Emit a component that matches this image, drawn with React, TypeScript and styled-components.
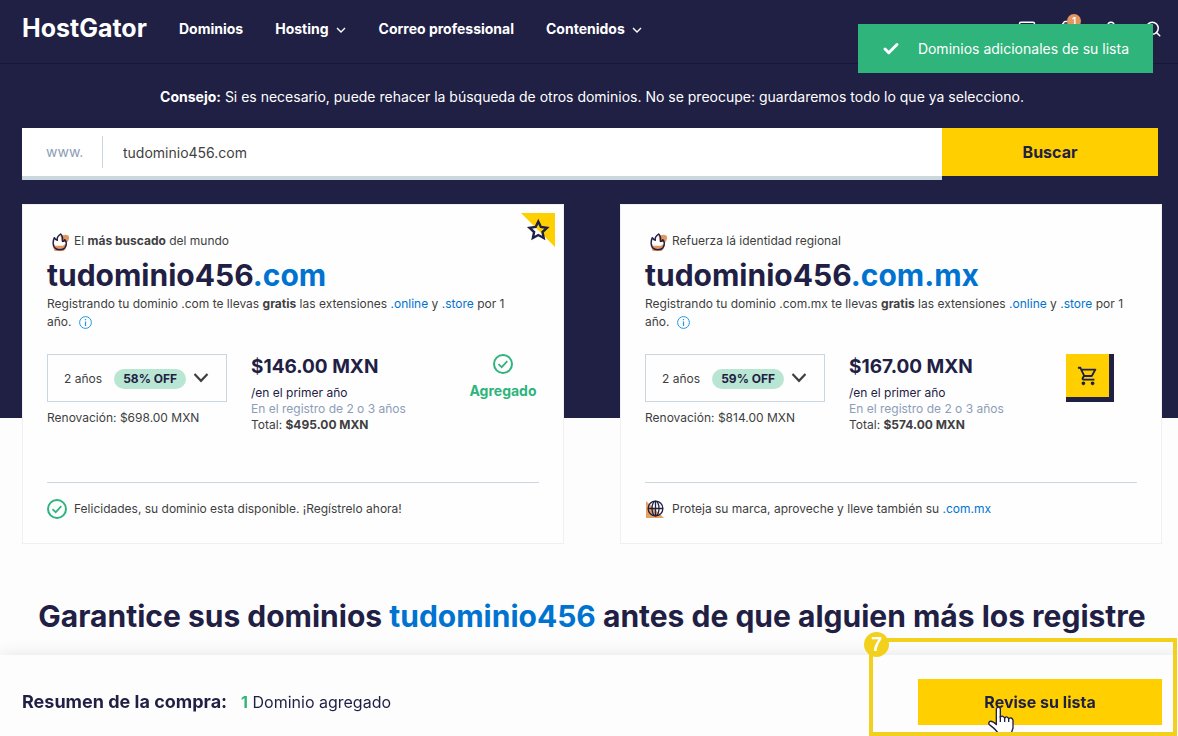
import React from 'react';
import styled, { createGlobalStyle, css } from 'styled-components';
import { Check, Monitor, Search, ShoppingBag, User } from 'lucide-react';
import { MdOutlineShoppingCart } from 'react-icons/md';

const color = {
  navy: '#1f2044',
  yellow: '#ffcf00',
  blue: '#0073d1',
  green: '#2fb47c',
  text: '#3f3f41',
  muted: '#8d9db8',
  line: '#cbd6de',
  mint: '#b9e6d3',
  peach: '#e59560',
  page: '#fdfdfd',
};

const GlobalStyle = createGlobalStyle`
  * { box-sizing: border-box; }
  body {
    margin: 0;
    background: ${color.page};
    color: ${color.text};
    font-family: Inter, "Liberation Sans", sans-serif;
    font-size: 12px;
    line-height: 18px;
  }
  button, input, select { font-family: inherit; margin: 0; border: 0; border-radius: 0; }
  h1, h2, p { margin: 0; }
  a { color: inherit; text-decoration: none; }
`;

const Page = styled.div`
  padding-bottom: 96px;
`;

const Hero = styled.div`
  background: ${color.navy};
  padding-bottom: 238px;
`;

const Header = styled.header`
  display: flex;
  align-items: center;
  height: 64px;
  padding: 0 16px 6px 22px;
  border-bottom: 1px solid #17173a;
  color: #fff;
`;

const Logo = styled.a`
  width: 157px;
  padding-bottom: 2px;
  font-size: 25px;
  font-weight: 700;
  line-height: 32px;
  white-space: nowrap;
`;

const Nav = styled.nav`
  display: flex;
  gap: 32px;
`;

const NavLink = styled.a`
  display: flex;
  align-items: center;
  gap: 6px;
  font-size: 14px;
  font-weight: 700;
  line-height: 20px;
  white-space: nowrap;
`;

const HeaderTools = styled.div`
  display: flex;
  gap: 24px;
  margin-left: auto;
`;

const ToolButton = styled.button`
  position: relative;
  display: flex;
  padding: 0;
  background: none;
  color: #fff;
`;

const CountBadge = styled.span`
  position: absolute;
  top: -6px;
  right: -3px;
  width: 14px;
  height: 14px;
  border-radius: 50%;
  background: ${color.peach};
  font-size: 10px;
  font-weight: 600;
  line-height: 14px;
  text-align: center;
`;

const Toast = styled.div`
  position: fixed;
  top: 24px;
  right: 25px;
  display: flex;
  align-items: center;
  justify-content: space-between;
  gap: 14px;
  min-width: 295px;
  height: 49px;
  padding: 0 24px;
  background: ${color.green};
  color: #fff;
  font-size: 14px;
  white-space: nowrap;
`;

const Tip = styled.p`
  padding: 23px 16px 21px 22px;
  color: #fff;
  font-size: 14px;
  line-height: 20px;
  text-align: center;
`;

const SearchForm = styled.form`
  display: flex;
  align-items: flex-start;
  margin: 0 20px 0 22px;
`;

const SearchField = styled.div`
  flex: 1;
  display: flex;
  align-items: center;
  height: 52px;
  background: #fff;
  border-bottom: 4px solid #cad7dd;
`;

const Prefix = styled.label`
  width: 81px;
  padding-left: 24px;
  border-right: 1px solid ${color.line};
  color: ${color.muted};
  font-size: 14px;
  line-height: 32px;
`;

const SearchInput = styled.input`
  flex: 1;
  height: 48px;
  padding: 0 20px;
  background: transparent;
  color: ${color.text};
  font-size: 14px;
  outline: none;
`;

const PrimaryButton = styled.button<{ $width: number; $height: number }>`
  width: ${(p) => p.$width}px;
  height: ${(p) => p.$height}px;
  padding: 0;
  background: ${color.yellow};
  color: ${color.navy};
  font-size: 16px;
  font-weight: 700;
  line-height: 20px;
`;

const Cards = styled.main`
  display: grid;
  grid-template-columns: 1fr 1fr;
  gap: 56px;
  margin: -214px 16px 0 22px;
`;

const Card = styled.article`
  position: relative;
  padding: 26px 24px 24px;
  background: #fefefe;
  border: 1px solid #f0f0f1;
`;

const Eyebrow = styled.p`
  display: flex;
  align-items: center;
  gap: 4px;
  height: 20px;
  padding-left: 3px;
`;

const DomainName = styled.h2`
  margin-top: 8px;
  color: ${color.navy};
  font-size: 30px;
  font-weight: 700;
  line-height: 32px;
`;

const Accent = styled.span`
  color: ${color.blue};
`;

const TextLink = styled.a`
  color: ${color.blue};
`;

const Description = styled.p`
  margin-top: 4px;
`;

const LastWord = styled.span`
  white-space: nowrap;
  svg { margin-left: 8px; vertical-align: -3px; }
`;

const Options = styled.div`
  display: flex;
  height: 128px;
  margin-top: 23px;
`;

const TermColumn = styled.div`
  width: 180px;
  margin-right: 24px;
`;

const Term = styled.div`
  position: relative;
`;

const TermSelect = styled.select`
  appearance: none;
  display: block;
  width: 100%;
  height: 48px;
  padding: 0 16px;
  border: 1px solid ${color.line};
  background: transparent;
  color: ${color.text};
  font-size: 12px;
`;

const TermExtras = styled.span`
  position: absolute;
  top: 15px;
  right: 18px;
  display: flex;
  align-items: center;
  gap: 7px;
  pointer-events: none;
`;

const Discount = styled.span`
  padding: 1px 9px;
  border-radius: 10px;
  background: ${color.mint};
  color: ${color.navy};
  font-size: 12px;
  font-weight: 700;
`;

const Renewal = styled.p`
  margin-top: 8px;
  line-height: 16px;
`;

const PriceColumn = styled.div`
  flex: 1;
  padding-top: 3px;
  line-height: 16px;
`;

const Price = styled.p`
  margin-bottom: 8px;
  color: ${color.navy};
  font-size: 19px;
  font-weight: 700;
  line-height: 20px;
`;

const PriceNote = styled.p<{ $tone?: 'dark' | 'muted' }>`
  ${(p) => p.$tone === 'dark' && css`color: ${color.navy};`}
  ${(p) => p.$tone === 'muted' && css`color: ${color.muted};`}
`;

const Added = styled.p`
  display: flex;
  flex-direction: column;
  align-items: center;
  gap: 7px;
  width: 72px;
  color: ${color.green};
  font-size: 14px;
  font-weight: 700;
  line-height: 20px;
`;

const CartButton = styled.button`
  display: flex;
  align-items: center;
  justify-content: center;
  width: 48px;
  height: 48px;
  margin-right: 23px;
  padding: 0;
  background: ${color.yellow};
  border: solid ${color.navy};
  border-width: 0 5px 5px 0;
  color: ${color.navy};
`;

const CardFooter = styled.p`
  display: flex;
  align-items: center;
  gap: 7px;
  padding-top: 16px;
  border-top: 1px solid ${color.line};
  line-height: 20px;
`;

const StarCorner = styled.span`
  position: absolute;
  top: 8px;
  right: 8px;
  display: flex;
`;

const Headline = styled.h1`
  margin: 52px 16px 0 22px;
  color: ${color.navy};
  font-size: 30px;
  font-weight: 700;
  line-height: 40px;
  text-align: center;
  white-space: nowrap;
`;

const SummaryBar = styled.footer`
  position: fixed;
  right: 0;
  bottom: 0;
  left: 0;
  display: flex;
  align-items: center;
  padding: 24px 16px 11px 22px;
  background: ${color.page};
  box-shadow: 0 0 16px rgba(0, 0, 0, 0.1);
  color: ${color.navy};
  font-size: 16px;
  line-height: 24px;
`;

const SummaryLabel = styled.strong`
  margin-right: 14px;
  font-size: 18px;
  font-weight: 700;
`;

const SummaryCount = styled.strong`
  color: ${color.green};
`;

const SummaryAction = styled.div`
  position: relative;
  display: flex;
  margin-left: auto;
`;

const Pointer = styled.svg`
  position: absolute;
  top: 27px;
  left: 70px;
`;

const StepFrame = styled.div`
  position: absolute;
  right: 1px;
  bottom: 0;
  width: 308px;
  height: 98px;
  border: 4px solid #f3d01c;
  pointer-events: none;
`;

const StepNumber = styled.span`
  position: absolute;
  top: -10px;
  left: -9px;
  width: 25px;
  height: 25px;
  border-radius: 50%;
  background: #f3d01c;
  color: #fff;
  font-family: "Liberation Sans", sans-serif;
  font-size: 20px;
  font-weight: 700;
  line-height: 25px;
  text-align: center;
`;

const NavChevron = () => (
  <svg width="12" height="12" viewBox="0 0 12 12" fill="none" stroke="currentColor" strokeWidth="1.4" aria-hidden="true">
    <path d="M2 5L6 9L10 5" />
  </svg>
);

const SelectChevron = () => (
  <svg width="16" height="14" viewBox="0 0 16 14" fill="none" stroke={color.text} strokeWidth="2.2" aria-hidden="true">
    <path d="M1.5 2L8 8.8L14.5 2" />
  </svg>
);

const FlameIcon = () => (
  <svg width="20" height="20" viewBox="0 0 60 60" aria-hidden="true">
    <path d="M32 16Q44 8 56 14Q60 24 50 36L34 30Z" fill={color.peach} />
    <path d="M10 40H48Q48 58 40 60H14Q9 52 10 40Z" fill={color.peach} />
    <path
      d="M32 9C22 16 20 22 22 28C18 27 15 24 13 20C8 30 8 44 14 50C21 58 38 58 45 50C51 42 50 31 44 26C42 31 39 32 37 31C39 24 37 15 32 9Z"
      fill="none" stroke={color.navy} strokeWidth="4.4" strokeLinejoin="round"
    />
    <path d="M14 32Q20 36 26 31L31 18L35 34H44Q46 43 38 44H16Q12 38 14 32Z" fill="#fff" />
  </svg>
);

const GlobeIcon = () => (
  <svg width="20" height="20" viewBox="0 0 20 20" aria-hidden="true">
    <path d="M1 2V19H19Z" fill="#e6a265" />
    <g fill="none" stroke={color.navy} strokeWidth="1.3">
      <circle cx="10.5" cy="9.5" r="7.4" />
      <ellipse cx="10.5" cy="9.5" rx="3.5" ry="7.4" />
      <path d="M10.5 2V17M3 9.5H18" />
    </g>
  </svg>
);

const CheckCircle = () => (
  <svg width="20" height="20" viewBox="0 0 20 20" fill="none" stroke={color.green} aria-hidden="true">
    <circle cx="10" cy="10" r="9" strokeWidth="2" />
    <path d="M5.5 10.2L8.7 13.2L14.3 7.2" strokeWidth="1.7" />
  </svg>
);

const InfoIcon = () => (
  <svg width="13" height="13" viewBox="0 0 13 13" fill="none" stroke="#2196e3" aria-label="Más información">
    <circle cx="6.5" cy="6.5" r="5.9" />
    <path d="M6.5 5.5V10M6.5 3V4.3" strokeWidth="1.2" />
  </svg>
);

const StarIcon = () => (
  <svg width="34" height="34" viewBox="0 0 34 34" aria-hidden="true">
    <path d="M0 0H34V34Z" fill={color.yellow} />
    <path
      d="M17.3 8.6L19.9 14L26 14.8L21.5 19L22.7 25L17.3 22L11.9 25L13.1 19L8.6 14.8L14.7 14Z"
      fill="none" stroke={color.navy} strokeWidth="2.4"
    />
  </svg>
);

type Domain = {
  id: string;
  eyebrow: React.ReactNode;
  tld: string;
  discount: string;
  renewal: string;
  price: string;
  total: string;
  added: boolean;
  footer: React.ReactNode;
};

const domains: Domain[] = [
  {
    id: 'com',
    eyebrow: <span>El <b>más buscado</b> del mundo</span>,
    tld: '.com',
    discount: '58% OFF',
    renewal: '$698.00 MXN',
    price: '$146.00 MXN',
    total: '$495.00 MXN',
    added: true,
    footer: <><CheckCircle /><span>Felicidades, su dominio esta disponible. ¡Regístrelo ahora!</span></>,
  },
  {
    id: 'com-mx',
    eyebrow: <span>Refuerza lá identidad regional</span>,
    tld: '.com.mx',
    discount: '59% OFF',
    renewal: '$814.00 MXN',
    price: '$167.00 MXN',
    total: '$574.00 MXN',
    added: false,
    footer: <><GlobeIcon /><span>Proteja su marca, aproveche y lleve también su <TextLink href="#com-mx">.com.mx</TextLink></span></>,
  },
];

const DomainCard = ({ domain }: { domain: Domain }) => (
  <Card id={domain.id}>
    {domain.added && <StarCorner><StarIcon /></StarCorner>}
    <Eyebrow><FlameIcon />{domain.eyebrow}</Eyebrow>
    <DomainName>tudominio456<Accent>{domain.tld}</Accent></DomainName>
    <Description>
      {`Registrando tu dominio ${domain.tld} te llevas `}<b>gratis</b>{' las extensiones '}
      <TextLink href="#online">.online</TextLink> y <TextLink href="#store">.store</TextLink>{' por 1 '}
      <LastWord>año.<InfoIcon /></LastWord>
    </Description>
    <Options>
      <TermColumn>
        <Term>
          <TermSelect aria-label="Período de registro" defaultValue="2">
            <option value="1">1 año</option>
            <option value="2">2 años</option>
            <option value="3">3 años</option>
          </TermSelect>
          <TermExtras>
            <Discount>{domain.discount}</Discount>
            <SelectChevron />
          </TermExtras>
        </Term>
        <Renewal>{`Renovación: ${domain.renewal}`}</Renewal>
      </TermColumn>
      <PriceColumn>
        <Price>{domain.price}</Price>
        <PriceNote $tone="dark">/en el primer año</PriceNote>
        <PriceNote $tone="muted">En el registro de 2 o 3 años</PriceNote>
        <PriceNote>Total: <b>{domain.total}</b></PriceNote>
      </PriceColumn>
      {domain.added
        ? <Added><CheckCircle />Agregado</Added>
        : <CartButton aria-label="Agregar al carrito"><MdOutlineShoppingCart size={22} /></CartButton>}
    </Options>
    <CardFooter>{domain.footer}</CardFooter>
  </Card>
);

export default function App() {
  return (
    <Page>
      <GlobalStyle />
      <Hero>
        <Header>
          <Logo href="#inicio">HostGator</Logo>
          <Nav>
            <NavLink href="#dominios">Dominios</NavLink>
            <NavLink href="#hosting">Hosting <NavChevron /></NavLink>
            <NavLink href="#correo">Correo professional</NavLink>
            <NavLink href="#contenidos">Contenidos <NavChevron /></NavLink>
          </Nav>
          <HeaderTools>
            <ToolButton aria-label="Panel"><Monitor size={18} /></ToolButton>
            <ToolButton aria-label="Carrito"><ShoppingBag size={18} /><CountBadge>1</CountBadge></ToolButton>
            <ToolButton aria-label="Cuenta"><User size={18} /></ToolButton>
            <ToolButton aria-label="Buscar en el sitio"><Search size={18} /></ToolButton>
          </HeaderTools>
        </Header>
        <Tip><b>Consejo:</b> Si es necesario, puede rehacer la búsqueda de otros dominios. No se preocupe: guardaremos todo lo que ya selecciono.</Tip>
        <SearchForm onSubmit={(e) => e.preventDefault()}>
          <SearchField>
            <Prefix htmlFor="domain">www.</Prefix>
            <SearchInput id="domain" type="text" defaultValue="tudominio456.com" />
          </SearchField>
          <PrimaryButton type="submit" $width={216} $height={48}>Buscar</PrimaryButton>
        </SearchForm>
      </Hero>
      <Cards>
        {domains.map((d) => <DomainCard key={d.id} domain={d} />)}
      </Cards>
      <Headline>Garantice sus dominios <Accent>tudominio456</Accent> antes de que alguien más los registre</Headline>
      <Toast role="status"><Check size={18} strokeWidth={4} />Dominios adicionales de su lista</Toast>
      <SummaryBar>
        <SummaryLabel>Resumen de la compra:</SummaryLabel>
        <span><SummaryCount>1</SummaryCount> Dominio agregado</span>
        <SummaryAction>
          <PrimaryButton type="button" $width={244} $height={46}>Revise su lista</PrimaryButton>
          <Pointer width="26" height="30" viewBox="0 0 78 90" aria-hidden="true">
            <path
              d="M25 56V8Q31 -1 37 8V34Q43 26 50 36Q57 28 62 38Q70 32 75 42V66Q72 76 68 86H34Q24 70 4 56Q0 50 6 46Q14 44 25 56Z"
              fill="#fff" stroke={color.navy} strokeWidth="4" strokeLinejoin="round"
            />
            <path d="M37 30V48M50 34V48M62 38V48" stroke={color.navy} strokeWidth="4" />
          </Pointer>
        </SummaryAction>
        <StepFrame><StepNumber>7</StepNumber></StepFrame>
      </SummaryBar>
    </Page>
  );
}
